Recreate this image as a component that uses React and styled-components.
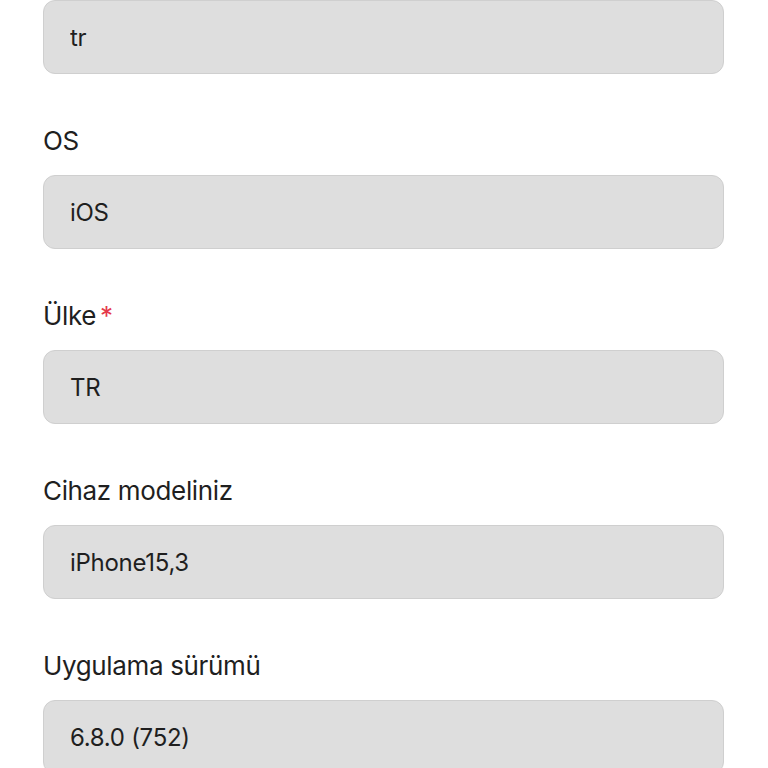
import styled, { createGlobalStyle } from "styled-components"

const GlobalStyle = createGlobalStyle`
  html, body {
    margin: 0;
    padding: 0;
    background: #ffffff;
  }
  body {
    font-family: Inter, "Noto Sans", sans-serif;
    color: #1f1f1f;
  }
`

const Page = styled.div`
  display: flex;
  flex-direction: column;
  padding: 0 44px 0 43px;
  height: 768px;
  overflow: hidden;
`

const Field = styled.div`
  display: flex;
  flex-direction: column;
  gap: 18px;
  margin-bottom: 51px;
`

const Label = styled.label`
  font-size: 26px;
  line-height: 32px;
  color: #1f1f1f;
  letter-spacing: -0.35px;
`

const Required = styled.span`
  color: #e5394a;
  margin-left: 4px;
`

const Input = styled.input`
  box-sizing: border-box;
  width: 100%;
  height: 74px;
  padding: 0 26px;
  font-family: inherit;
  font-size: 24px;
  color: #1f1f1f;
  background: #dedede;
  border: 1.5px solid #cfcfcf;
  border-radius: 12px;
  letter-spacing: -0.3px;

  &:focus {
    outline: none;
  }
`

const fields = [
  { label: "OS", value: "iOS" },
  { label: "Ülke", value: "TR", required: true },
  { label: "Cihaz modeliniz", value: "iPhone15,3" },
  { label: "Uygulama sürümü", value: "6.8.0 (752)" },
]

export default function App() {
  return (
    <>
      <GlobalStyle />
      <Page>
        <Field>
          <Input readOnly value="tr" />
        </Field>
        {fields.map(f => (
          <Field key={f.label}>
            <Label>
              {f.label}
              {f.required && <Required>*</Required>}
            </Label>
            <Input readOnly value={f.value} />
          </Field>
        ))}
      </Page>
    </>
  )
}
